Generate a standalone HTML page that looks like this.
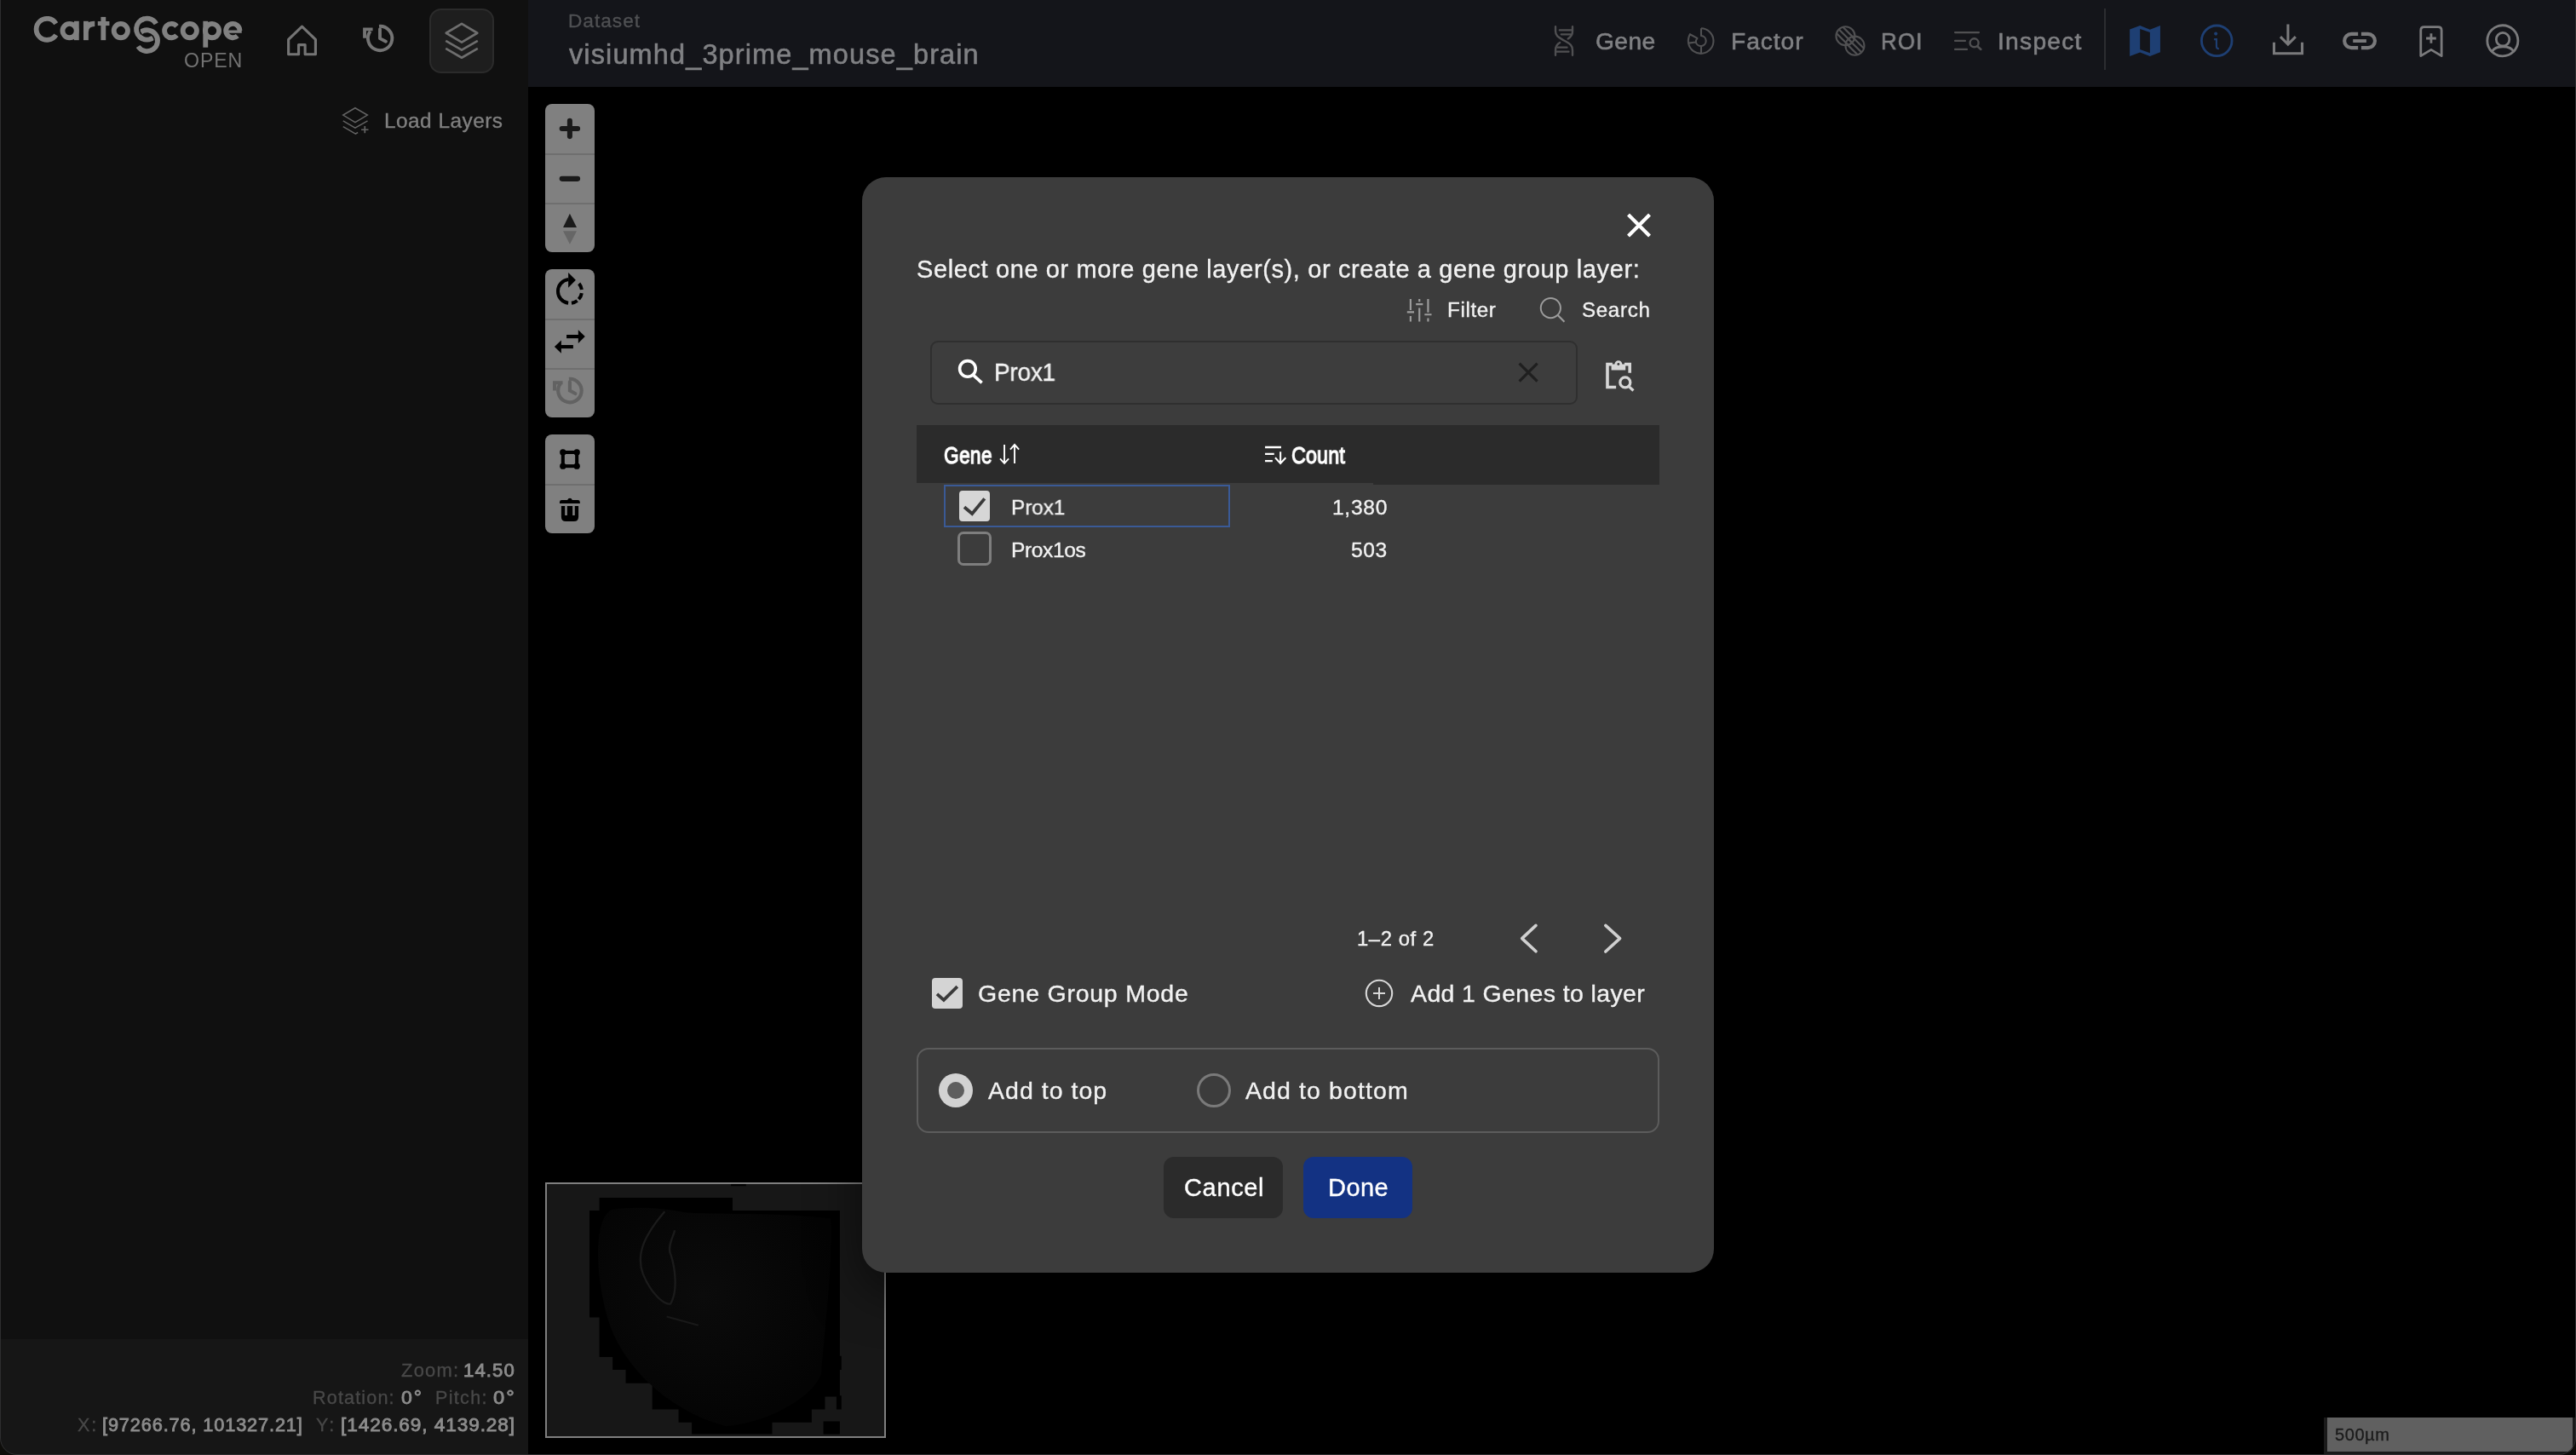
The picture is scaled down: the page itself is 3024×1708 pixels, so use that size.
<!DOCTYPE html>
<html lang="en"><head><meta charset="utf-8"><title>CartoScope</title>
<style>
*{box-sizing:border-box;margin:0;padding:0}
html,body{background:#000}
body{width:3024px;height:1708px;font-family:"Liberation Sans",sans-serif;}
#r{position:relative;width:3024px;height:1708px;overflow:hidden;background:#000}
.a{position:absolute}
.t{position:absolute;white-space:pre;line-height:1;will-change:transform;-webkit-text-stroke:0.35px;font-family:"Liberation Sans",sans-serif;}
svg{position:absolute;overflow:visible}
.ctl{position:absolute;left:640px;width:58px;background:#808080;border-radius:8px}
.ctl i{position:absolute;left:0;width:58px;height:2px;background:#6f6f6f}
</style></head><body><div id="r">
<div class="a" style="left:0;top:0;width:620px;height:1708px;background:#101010"></div>
<div class="a" style="left:620px;top:0;width:2404px;height:102px;background:#14151a"></div>
<div class="a" style="left:0;top:1572px;width:620px;height:136px;background:#161616"></div>
<svg style="left:20px;top:0" width="300" height="100" viewBox="0 0 2576 859" fill="none" stroke="#818181" stroke-width="50">
<path d="M392.2 238.0A107.5 107.5 0 1 0 392.2 352.0"/>
<circle cx="528.5" cy="310" r="70"/><path d="M599.5 213V405"/>
<path d="M694.7 213V405"/><path d="M694.7 320Q694.7 239.6 783.5 239.6" stroke-width="52"/>
<path d="M869.8 171V405"/><path d="M813.5 236.6H931" stroke-width="43.5"/>
<circle cx="1046" cy="310" r="70"/>
<path d="M1401.7 239.5A107 107 0 1 0 1388.5 364.6"/>
<path d="M1241.2 328.0A107 107 0 1 1 1220.3 468.3" stroke="#101010" stroke-width="78"/><path d="M1241.2 328.0A107 107 0 1 1 1220.3 468.3"/>
<path d="M1233.3 368.7A107 107 0 0 1 1247.6 205.4" stroke="#101010" stroke-width="78"/><path d="M1263.8 390.0A107 107 0 0 1 1281.3 189.6"/>
<path d="M1610.0 265.0A70 70 0 1 0 1610.0 355.0"/>
<circle cx="1741.4" cy="310" r="70"/>
<path d="M1900.2 213V478.5"/><circle cx="1966.5" cy="310" r="70"/>
<path d="M2110 319H2265" stroke-width="28"/><path d="M2245.5 310.0A70 70 0 1 0 2222.3 362.0"/>
</svg>
<div class="t" style="left:216.00px;top:60px;font-size:23.2px;font-weight:400;color:#727272;letter-spacing:0.850px;-webkit-text-stroke:0;">OPEN</div>
<div class="a" style="left:504px;top:10px;width:76px;height:76px;border-radius:14px;background:#1e1e1e;border:2px solid #2b2b2b"></div>
<svg style="left:310px;top:0" width="310" height="100" viewBox="0 0 2576 831" fill="none" stroke="#747474" stroke-linejoin="round">
<path d="M238 530V385L370 258L502 385V530H400V437H337V530Z" stroke-width="26"/>
<g stroke-width="32"><path d="M1122 256 A118 118 0 1 1 1036 304"/><path d="M1130 283V375L1188 405" stroke-linecap="round"/><path d="M981 372V286H1060" stroke-linejoin="miter"/></g>
<g stroke-width="22" stroke="#6e6e6e"><path d="M1928 232L2080 322L1928 412L1776 322Z"/><path d="M1772 397L1928 488L2084 397"/><path d="M1772 472L1928 563L2084 472"/></g>
</svg>
<svg style="left:380px;top:100px" width="260" height="80" viewBox="0 0 2576 793" fill="none" stroke="#636363" stroke-width="15">
<path d="M365 265L508 348L365 432L225 348Z"/><path d="M225 415L365 498L510 415"/><path d="M225 482L370 567L397 550"/>
<path d="M436 518H520M478 476V558" stroke-width="17"/>
</svg>
<div class="t" style="left:450.70px;top:130px;font-size:24.4px;font-weight:400;color:#808080;letter-spacing:0.471px;">Load Layers</div>
<div class="t" style="left:666.69px;top:14px;font-size:22.6px;font-weight:400;color:#4f5053;letter-spacing:1.001px;transform:scaleX(1.0019);transform-origin:0 0;">Dataset</div>
<div class="t" style="left:668.13px;top:48px;font-size:32.5px;font-weight:400;color:#808184;letter-spacing:1.118px;-webkit-text-stroke:0.55px;">visiumhd_3prime_mouse_brain</div>
<svg style="left:1800px;top:10px" width="360" height="80" viewBox="0 0 2576 572" fill="none" stroke="#5b5b5d" stroke-width="15">
<g stroke="#505052" stroke-width="17" stroke-linecap="round"><path d="M186.2 152V190C186.2 232 215 243 257.6 268C300 293 329.1 304 329.1 350V392"/>
<path d="M329.1 152V192C329.1 225 312 242 291.3 253.7M222.8 286.7C200 300 186.2 318 186.2 350V392"/>
<path d="M220 181.6H325M234 217H316M203 326.8H283M191 362.2H297" stroke-width="16"/></g>
<g stroke="#505052" stroke-width="15" stroke-linejoin="round"><path d="M1409.6 165.8A106 106 0 1 1 1302.9 290.2"/>
<path d="M1409.6 165.8V228.8A43 43 0 1 1 1365.5 282L1302.9 290.2A112 112 0 0 1 1315.9 215.9L1377.3 248.9A48 48 0 0 0 1365.5 282"/>
<path d="M1409.6 315V378"/></g>
</svg>
<div class="t" style="left:1872.65px;top:34px;font-size:28.2px;font-weight:400;color:#808184;letter-spacing:0.396px;-webkit-text-stroke:0.6px;">Gene</div>
<div class="t" style="left:2032.43px;top:34px;font-size:28.2px;font-weight:400;color:#808184;letter-spacing:0.944px;-webkit-text-stroke:0.6px;">Factor</div>
<svg style="left:2130px;top:10px" width="360" height="80" viewBox="0 0 2576 572" fill="none" stroke="#5b5b5d" stroke-width="12">
<defs><clipPath id="c1"><circle cx="260.8" cy="230.4" r="79"/></clipPath><clipPath id="c2"><circle cx="339.6" cy="312.2" r="79"/></clipPath></defs>
<g stroke="#505052"><circle cx="260.8" cy="230.4" r="78.8" stroke-width="15"/><circle cx="339.6" cy="312.2" r="78.8" stroke-width="15"/>
<g clip-path="url(#c1)" stroke-width="16"><path d="M144.2 167.0L324.2 347.0M170.8 140.4L350.8 320.4M197.4 113.8L377.4 293.8"/></g>
<g clip-path="url(#c2)" stroke-width="16"><path d="M223.0 248.8L403.0 428.8M249.6 222.2L429.6 402.2M276.2 195.6L456.2 375.6"/></g></g>
<g stroke="#505052" stroke-width="16" stroke-linecap="round"><path d="M1181 200.2H1381M1181 271.3H1266M1181 342.9H1281"/><circle cx="1342.4" cy="287.9" r="35.8" stroke-width="17"/><path d="M1368 316L1398 343" stroke-width="18"/></g>
</svg>
<div class="t" style="left:2208.04px;top:34px;font-size:28.2px;font-weight:400;color:#808184;letter-spacing:1.312px;transform:scaleX(0.9143);transform-origin:0 0;-webkit-text-stroke:0.6px;">ROI</div>
<div class="t" style="left:2344.62px;top:34px;font-size:28.2px;font-weight:400;color:#808184;letter-spacing:1.261px;-webkit-text-stroke:0.6px;">Inspect</div>
<div class="a" style="left:2470px;top:10px;width:2px;height:72px;background:#2c2d31"></div>
<svg style="left:2420px;top:0" width="604" height="180" viewBox="0 0 2576 768" fill="none" stroke="#7a7a7c" stroke-width="13">
<path d="M341.4 146.8L392.9 128.1L442.6 148L494.2 128.1V261.2L442.6 281.1L392.9 262.4L341.4 281.1Z" fill="#1e3f73" stroke="none"/>
<path d="M392.9 145.2L442.6 161.9V265.2L392.9 247.3Z" fill="#14151a" stroke="none"/>
<circle cx="777" cy="204" r="76" stroke="#1e3f73" stroke-width="12"/>
<path d="M763.7 196.8H775.7V233Q775.7 244.5 788 244.5" stroke="#1e3f73" stroke-width="9"/><circle cx="772.5" cy="169" r="8.7" fill="#1e3f73" stroke="none"/>
<path d="M1134 122V218M1096 184L1134 222L1172 184"/><path d="M1064 212V268H1205V212"/>
<path d="M1485 170H1451.4A34.75 34.75 0 0 0 1451.4 239.5H1485M1501 170H1534.7A34.75 34.75 0 0 1 1534.7 239.5H1501" stroke-width="17.5"/><path d="M1459.5 205H1526.5" stroke-width="16.5"/>
<path d="M1799 152Q1799 135 1816 135H1886Q1903 135 1903 152V280L1851 249L1799 280Z" stroke-width="12" stroke-linejoin="round"/><path d="M1826 192H1876M1851 167V217" stroke-width="12"/>
<circle cx="2209" cy="204" r="77" stroke-width="12"/><circle cx="2210" cy="197" r="33" stroke-width="12"/><path d="M2153 262C2172 224 2248 224 2267 262" stroke-width="12"/>
</svg>
<div class="ctl" style="top:122px;height:174px"><i style="top:58px"></i><i style="top:116px"></i></div>
<div class="ctl" style="top:316px;height:174px"><i style="top:58px"></i><i style="top:116px"></i></div>
<div class="ctl" style="top:510px;height:116px"><i style="top:58px"></i></div>
<svg style="left:630px;top:112px" width="80" height="200" viewBox="0 0 582 1455" fill="none" stroke="#1a1a1a">
<path d="M216 283H350M283 216V350M216 712H350" stroke-width="44" stroke-linecap="round"/>
<path d="M283 1010L342 1128H226Z" fill="#1a1a1a" stroke="none"/><path d="M226 1158H342L283 1272Z" fill="#666" stroke="none"/>
</svg>
<svg style="left:630px;top:306px" width="80" height="200" viewBox="0 0 582 1455" fill="none" stroke="#000">
<path d="M270 160.1A102 102 0 0 0 270 362.3" stroke-width="29"/>
<path d="M361.8 195.6A102 102 0 0 1 384.7 247.0M384.4 277.2A102 102 0 0 1 359.5 329.5M346.5 341.6A102 102 0 0 1 297.9 362.2" stroke-width="29"/>
<path d="M269.9 101.9L333.9 165.5L269.9 230.6Z" fill="#000" stroke="none"/>
<path d="M255 648H360" stroke-width="30"/><path d="M355 592L413 648L355 705Z" fill="#000" stroke="none"/>
<path d="M205 735H312" stroke-width="30"/><path d="M210 680L152 735L210 792Z" fill="#000" stroke="none"/>
<g stroke="#626262" stroke-width="30"><path d="M276 1010 A100 100 0 1 1 203 1050"/><path d="M283 1035V1110L330 1135" stroke-linecap="round"/><path d="M153 1110V1042H222"/></g>
</svg>
<svg style="left:630px;top:500px" width="80" height="140" viewBox="0 0 831 1455" fill="#000" stroke="#000">
<rect x="320" y="322" width="170" height="168" fill="none" stroke-width="42"/>
<circle cx="320" cy="322" r="38" stroke="none"/><circle cx="490" cy="322" r="38" stroke="none"/><circle cx="320" cy="490" r="38" stroke="none"/><circle cx="490" cy="490" r="38" stroke="none"/>
<path d="M280 945V930Q280 905 305 905H375Q385 882 405 882Q425 882 435 905H503Q528 905 528 930V945Z" stroke="none"/>
<path d="M300 978H510V1110Q510 1165 455 1165H355Q300 1165 300 1110Z" stroke="none"/>
<path d="M345 978H372V1090H345ZM438 978H465V1090H438Z" fill="#808080" stroke="none"/>
</svg>
<div class="a" style="left:640px;top:1388px;width:400px;height:300px;background:#171717;border:2px solid #7f7f7f"></div>
<svg style="left:620px;top:1370px" width="440" height="338" viewBox="0 0 1894 1455">
<defs><radialGradient id="br" cx="0.45" cy="0.4" r="0.6"><stop offset="0" stop-color="#0b0b0b"/><stop offset="1" stop-color="#040404"/></radialGradient></defs>
<path d="M360 155H1033V220H1575V955H1583V1025H1575V1155H1583V1225H1558V1160H1500V1225H1433V1290H1233V1350H827V1290H760V1225H627V1092H493V1025H427V960H360V760H310V220H360Z" fill="#000"/>
<rect x="1492" y="1285" width="83" height="65" fill="#000"/>
<rect x="1025" y="86" width="76" height="10" fill="#000"/>
<path d="M420 215C340 260 330 500 400 760C470 1000 700 1230 1000 1310C1200 1290 1420 1180 1480 1050C1500 800 1540 500 1530 260C1300 230 1000 240 800 230C650 200 520 200 420 215Z" fill="url(#br)"/>
<path d="M690 225C600 330 540 430 580 540C620 640 690 700 720 690C760 620 740 500 720 440C700 400 740 340 740 320" fill="none" stroke="#1b1b1b" stroke-width="10"/>
<path d="M700 755L860 800" stroke="#191919" stroke-width="9"/>
</svg>
<div class="a" style="left:2728px;top:1664px;width:296px;height:44px;background:#606060;border:4px solid #1a1a1a;border-top:none"></div>
<div class="t" style="left:2740.66px;top:1674px;font-size:20px;font-weight:400;color:#1c1c1c;letter-spacing:0.578px;">500µm</div>
<div class="t" style="left:470.54px;top:1599px;font-size:21.5px;font-weight:400;color:#484848;letter-spacing:1.227px;transform:scaleX(1.0186);transform-origin:0 0;">Zoom:</div>
<div class="t" style="left:543.67px;top:1599px;font-size:21.5px;font-weight:400;color:#8c8c8c;letter-spacing:1.061px;transform:scaleX(1.0280);transform-origin:0 0;-webkit-text-stroke:0.85px;">14.50</div>
<div class="t" style="left:366.69px;top:1631px;font-size:21.5px;font-weight:400;color:#484848;letter-spacing:1.119px;transform:scaleX(1.0063);transform-origin:0 0;">Rotation:</div>
<div class="t" style="left:470.52px;top:1631px;font-size:21.5px;font-weight:400;color:#8c8c8c;letter-spacing:1.890px;transform:scaleX(1.0725);transform-origin:0 0;-webkit-text-stroke:0.85px;">0°</div>
<div class="t" style="left:511.00px;top:1631px;font-size:21.5px;font-weight:400;color:#484848;letter-spacing:1.316px;transform:scaleX(1.0007);transform-origin:0 0;">Pitch:</div>
<div class="t" style="left:578.79px;top:1631px;font-size:21.5px;font-weight:400;color:#8c8c8c;letter-spacing:1.746px;transform:scaleX(1.1053);transform-origin:0 0;-webkit-text-stroke:0.85px;">0°</div>
<div class="t" style="left:90.60px;top:1663px;font-size:21.5px;font-weight:400;color:#484848;letter-spacing:1.902px;">X:</div>
<div class="t" style="left:119.95px;top:1663px;font-size:21.5px;font-weight:400;color:#8c8c8c;letter-spacing:0.868px;transform:scaleX(1.0098);transform-origin:0 0;-webkit-text-stroke:0.85px;">[97266.76, 101327.21]</div>
<div class="t" style="left:370.77px;top:1663px;font-size:21.5px;font-weight:400;color:#484848;letter-spacing:2.169px;">Y:</div>
<div class="t" style="left:400.03px;top:1663px;font-size:21.5px;font-weight:400;color:#8c8c8c;letter-spacing:0.854px;transform:scaleX(1.0531);transform-origin:0 0;-webkit-text-stroke:0.85px;">[1426.69, 4139.28]</div>
<div class="a" style="left:1012px;top:208px;width:1000px;height:1286px;border-radius:28px;background:#3c3c3c;box-shadow:0 20px 60px rgba(0,0,0,.55)"></div>
<svg style="left:1900px;top:240px" width="50" height="50" viewBox="0 0 50 50" fill="none" stroke="#fff" stroke-width="4.2"><path d="M11.5 12L36.5 37M36.5 12L11.5 37"/></svg>
<div class="t" style="left:1076.05px;top:302px;font-size:29px;font-weight:400;color:#f2f2f2;letter-spacing:0.611px;">Select one or more gene layer(s), or create a gene group layer:</div>
<svg style="left:1560px;top:230px" width="460" height="170" viewBox="0 0 2576 952" fill="none" stroke="#9c9c9c" stroke-width="12">
<path d="M537 678V750M537 790V826M595 678V696M595 736V826M652 678V766M652 804V826"/>
<path d="M514 764H560M572 712H618M629 780H675"/>
<circle cx="1458" cy="737" r="65" stroke-width="11"/><path d="M1505 784L1548 828" stroke-width="12"/>
</svg>
<div class="t" style="left:1699.00px;top:352px;font-size:24.2px;font-weight:400;color:#f2f2f2;letter-spacing:0.636px;">Filter</div>
<div class="t" style="left:1856.68px;top:352px;font-size:24.2px;font-weight:400;color:#f2f2f2;letter-spacing:0.644px;">Search</div>
<div class="a" style="left:1092px;top:400px;width:760px;height:75px;border-radius:9px;border:2px solid #2f2f2f;background:#3d3d3d"></div>
<svg style="left:1120px;top:415px" width="40" height="40" viewBox="0 0 40 40" fill="none" stroke="#fff" stroke-width="3.6"><circle cx="15.9" cy="17.9" r="9.3"/><path d="M22.6 25.4L32.6 34.4"/></svg>
<div class="t" style="left:1167.05px;top:423px;font-size:29px;font-weight:400;color:#f4f4f4;letter-spacing:-0.251px;transform:scaleX(0.9646);transform-origin:0 0;">Prox1</div>
<svg style="left:1775px;top:418px" width="40" height="40" viewBox="0 0 40 40" fill="none" stroke="#1f1f1f" stroke-width="3.2"><path d="M8.6 8.6L29.6 29.6M29.6 8.6L8.6 29.6"/></svg>
<svg style="left:1740px;top:390px" width="220" height="100" viewBox="0 0 2576 1171" fill="none" stroke="#d6d6d6" stroke-width="42">
<path d="M1840 755H1721V441H1790M1955 441H2028V560"/>
<path d="M1775 440H1820A52 52 0 0 1 1924 440H1970V520H1775Z" fill="#d6d6d6" stroke="none"/><circle cx="1872" cy="440" r="17" fill="#3c3c3c" stroke="none"/>
<circle cx="1965" cy="690" r="70" stroke-width="38"/><path d="M2012 742L2078 802" stroke-width="38"/>
</svg>
<div class="a" style="left:1076px;top:499px;width:872px;height:68px;background:#2b2b2b"></div>
<div class="a" style="left:1612px;top:499px;width:336px;height:70px;background:#2b2b2b"></div>
<div class="t" style="left:1107.80px;top:520px;font-size:28.2px;font-weight:400;color:#fff;letter-spacing:0.492px;transform:scaleX(0.8029);transform-origin:0 0;-webkit-text-stroke:1.3px;">Gene</div>
<div class="t" style="left:1516.00px;top:520px;font-size:28.2px;font-weight:400;color:#fff;letter-spacing:0.164px;transform:scaleX(0.8271);transform-origin:0 0;-webkit-text-stroke:1.3px;">Count</div>
<svg style="left:1076px;top:490px" width="600" height="190" viewBox="0 0 2576 816" fill="none" stroke="#fff" stroke-width="8">
<path d="M442.2 137.5V231M420.3 208L442.2 231.5L464.1 208M493.7 232V138M471.8 162L493.7 137.5L515.6 162" stroke-width="8.2"/>
<path d="M1756.4 150.3H1837.5M1756.4 184.6H1802.3M1756.4 219.4H1794.2" stroke-width="9.8"/><path d="M1834.1 172.6V231M1807.5 203L1834.1 231.5L1860.7 203" stroke-width="8.8"/>
</svg>
<div class="a" style="left:1108px;top:569px;width:336px;height:50px;border:2px solid #3a5a96"></div>
<div class="a" style="left:1126px;top:576px;width:36px;height:36px;border-radius:4px;background:#d6d6d6"></div>
<svg style="left:1126px;top:576px" width="36" height="36" viewBox="0 0 36 36" fill="none" stroke="#3a3a3a" stroke-width="3.8"><path d="M6 19.2L15.2 27L29.8 9.4"/></svg>
<div class="t" style="left:1187.19px;top:584px;font-size:24.6px;font-weight:400;color:#f2f2f2;letter-spacing:-0.018px;transform:scaleX(0.9876);transform-origin:0 0;">Prox1</div>
<div class="t" style="left:1563.57px;top:584px;font-size:24.6px;font-weight:400;color:#f2f2f2;letter-spacing:0.692px;">1,380</div>
<div class="a" style="left:1124px;top:624px;width:40px;height:40px;border-radius:7px;border:3px solid #7e7e7e"></div>
<div class="t" style="left:1187.19px;top:634px;font-size:24.6px;font-weight:400;color:#f2f2f2;letter-spacing:-0.414px;">Prox1os</div>
<div class="t" style="left:1585.74px;top:634px;font-size:24.6px;font-weight:400;color:#f2f2f2;letter-spacing:0.609px;">503</div>
<div class="t" style="left:1593.05px;top:1090px;font-size:23.8px;font-weight:400;color:#f2f2f2;letter-spacing:0.593px;">1–2 of 2</div>
<svg style="left:1770px;top:1070px" width="150" height="64" viewBox="1770 1070 150 64" fill="none" stroke="#d0d0d0" stroke-width="3.6" stroke-linecap="round" stroke-linejoin="round"><path d="M1803 1086.4L1786.7 1101.6L1803 1116.8M1884.8 1086.4L1901.6 1101.6L1884.8 1117"/></svg>
<div class="a" style="left:1094px;top:1148px;width:36px;height:36px;border-radius:4px;background:#d4d4d4"></div>
<svg style="left:1094px;top:1148px" width="36" height="36" viewBox="0 0 36 36" fill="none" stroke="#3a3a3a" stroke-width="3.8"><path d="M6 18.8L13.9 25.9L29.8 10.2"/></svg>
<div class="t" style="left:1148.05px;top:1152px;font-size:28.5px;font-weight:400;color:#f2f2f2;letter-spacing:0.763px;">Gene Group Mode</div>
<svg style="left:1600px;top:1146px" width="40" height="40" viewBox="0 0 40 40" fill="none" stroke="#d8d8d8" stroke-width="2.1"><circle cx="19" cy="19.9" r="15.2"/><path d="M12 19.9H26M19 12.9V26.9" stroke-width="2"/></svg>
<div class="t" style="left:1655.80px;top:1152px;font-size:28.5px;font-weight:400;color:#f2f2f2;letter-spacing:0.369px;">Add 1 Genes to layer</div>
<div class="a" style="left:1076px;top:1230px;width:872px;height:100px;border-radius:14px;border:2px solid #5c5c5c"></div>
<div class="a" style="left:1102px;top:1260px;width:40px;height:40px;border-radius:50%;background:#d2d2d2"></div>
<div class="a" style="left:1112px;top:1270px;width:20px;height:20px;border-radius:50%;background:#5e5e5e"></div>
<div class="t" style="left:1159.50px;top:1266px;font-size:28.5px;font-weight:400;color:#f2f2f2;letter-spacing:1.018px;">Add to top</div>
<div class="a" style="left:1405px;top:1260px;width:40px;height:40px;border-radius:50%;border:3px solid #7a7a7a"></div>
<div class="t" style="left:1461.90px;top:1266px;font-size:28.5px;font-weight:400;color:#f2f2f2;letter-spacing:1.102px;transform:scaleX(1.0002);transform-origin:0 0;">Add to bottom</div>
<div class="a" style="left:1366px;top:1358px;width:140px;height:72px;border-radius:12px;background:#2b2b2b"></div>
<div class="t" style="left:1390.13px;top:1380px;font-size:29px;font-weight:400;color:#fff;letter-spacing:0.657px;">Cancel</div>
<div class="a" style="left:1530px;top:1358px;width:128px;height:72px;border-radius:12px;background:#133283"></div>
<div class="t" style="left:1558.94px;top:1380px;font-size:29px;font-weight:400;color:#fff;letter-spacing:0.437px;">Done</div>
<div class="a" style="left:0;top:-2px;width:3024px;height:1710px;border:1px solid #2e2e2f;border-radius:0 0 20px 20px;box-shadow:0 0 0 40px #0e0d0a;pointer-events:none"></div>
</div></body></html>
